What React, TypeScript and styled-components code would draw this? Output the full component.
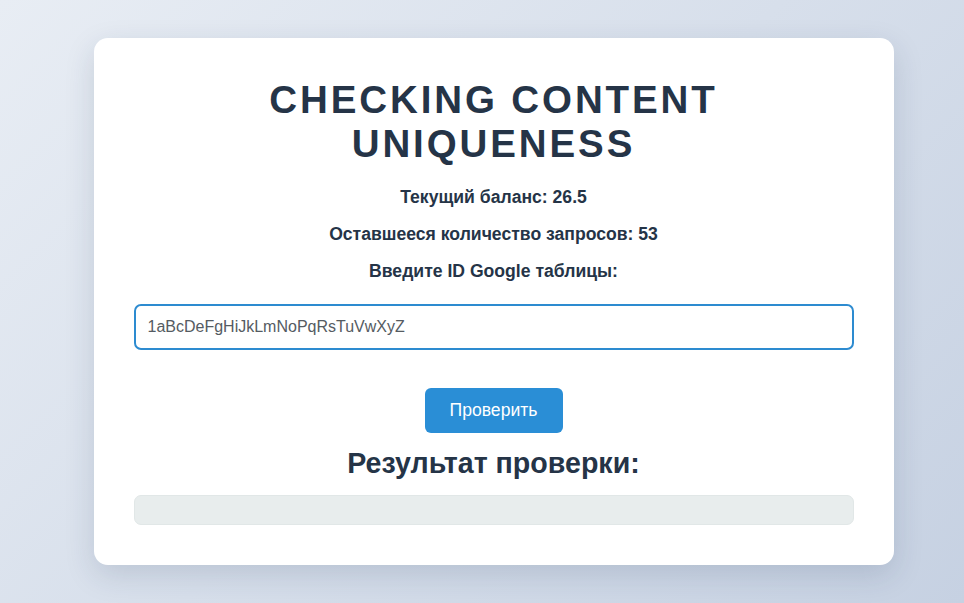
import styled, { createGlobalStyle } from "styled-components";

const GlobalStyle = createGlobalStyle`
  html, body {
    margin: 0;
    padding: 0;
    height: 100%;
  }
  body {
    font-family: "Liberation Sans", Arial, Helvetica, sans-serif;
    background: linear-gradient(135deg, #e8edf4 0%, #c6d1e2 100%);
    min-height: 603px;
  }
`;

const Page = styled.div`
  display: flex;
  justify-content: center;
  padding-top: 38px;
  padding-left: 23px;
`;

const Card = styled.div`
  width: 800px;
  box-sizing: border-box;
  padding: 40px;
  background: #ffffff;
  border-radius: 14px;
  box-shadow: 0 10px 30px rgba(30, 50, 80, 0.15);
  display: flex;
  flex-direction: column;
  align-items: center;
  color: #253447;
`;

const Title = styled.h1`
  margin: 0 0 21px;
  width: 520px;
  font-size: 38.5px;
  line-height: 44px;
  font-weight: 700;
  letter-spacing: 2.9px;
  text-align: center;
  text-transform: uppercase;
`;

const Info = styled.p<{ $last?: boolean }>`
  margin: 0 0 ${(p) => (p.$last ? "22px" : "16px")};
  font-size: 17.6px;
  line-height: 21px;
  font-weight: 700;
  text-align: center;
`;

const Input = styled.input`
  width: 100%;
  box-sizing: border-box;
  height: 46px;
  padding: 0 12px;
  border: 2px solid #2d8bd0;
  border-radius: 7px;
  font-family: inherit;
  font-size: 16px;
  color: #555b62;
  outline: none;
  margin-bottom: 38px;
`;

const Button = styled.button`
  height: 45px;
  padding: 0 25px;
  border: none;
  border-radius: 6px;
  background: #2a8ed6;
  color: #ffffff;
  font-family: inherit;
  font-size: 17.6px;
  cursor: pointer;
  margin-bottom: 14px;
`;

const ResultTitle = styled.h2`
  margin: 0 0 16px;
  font-size: 28.6px;
  line-height: 32px;
  font-weight: 700;
  text-align: center;
`;

const ResultBox = styled.div`
  width: 100%;
  box-sizing: border-box;
  height: 30px;
  border-radius: 7px;
  background: #e8eded;
  border: 1px solid #e1e7e7;
`;

export default function App() {
  return (
    <>
      <GlobalStyle />
      <Page>
        <Card>
          <Title>Checking content uniqueness</Title>
          <Info>Текущий баланс: 26.5</Info>
          <Info>Оставшееся количество запросов: 53</Info>
          <Info $last>Введите ID Google таблицы:</Info>
          <Input defaultValue="1aBcDeFgHiJkLmNoPqRsTuVwXyZ" />
          <Button>Проверить</Button>
          <ResultTitle>Результат проверки:</ResultTitle>
          <ResultBox />
        </Card>
      </Page>
    </>
  );
}
